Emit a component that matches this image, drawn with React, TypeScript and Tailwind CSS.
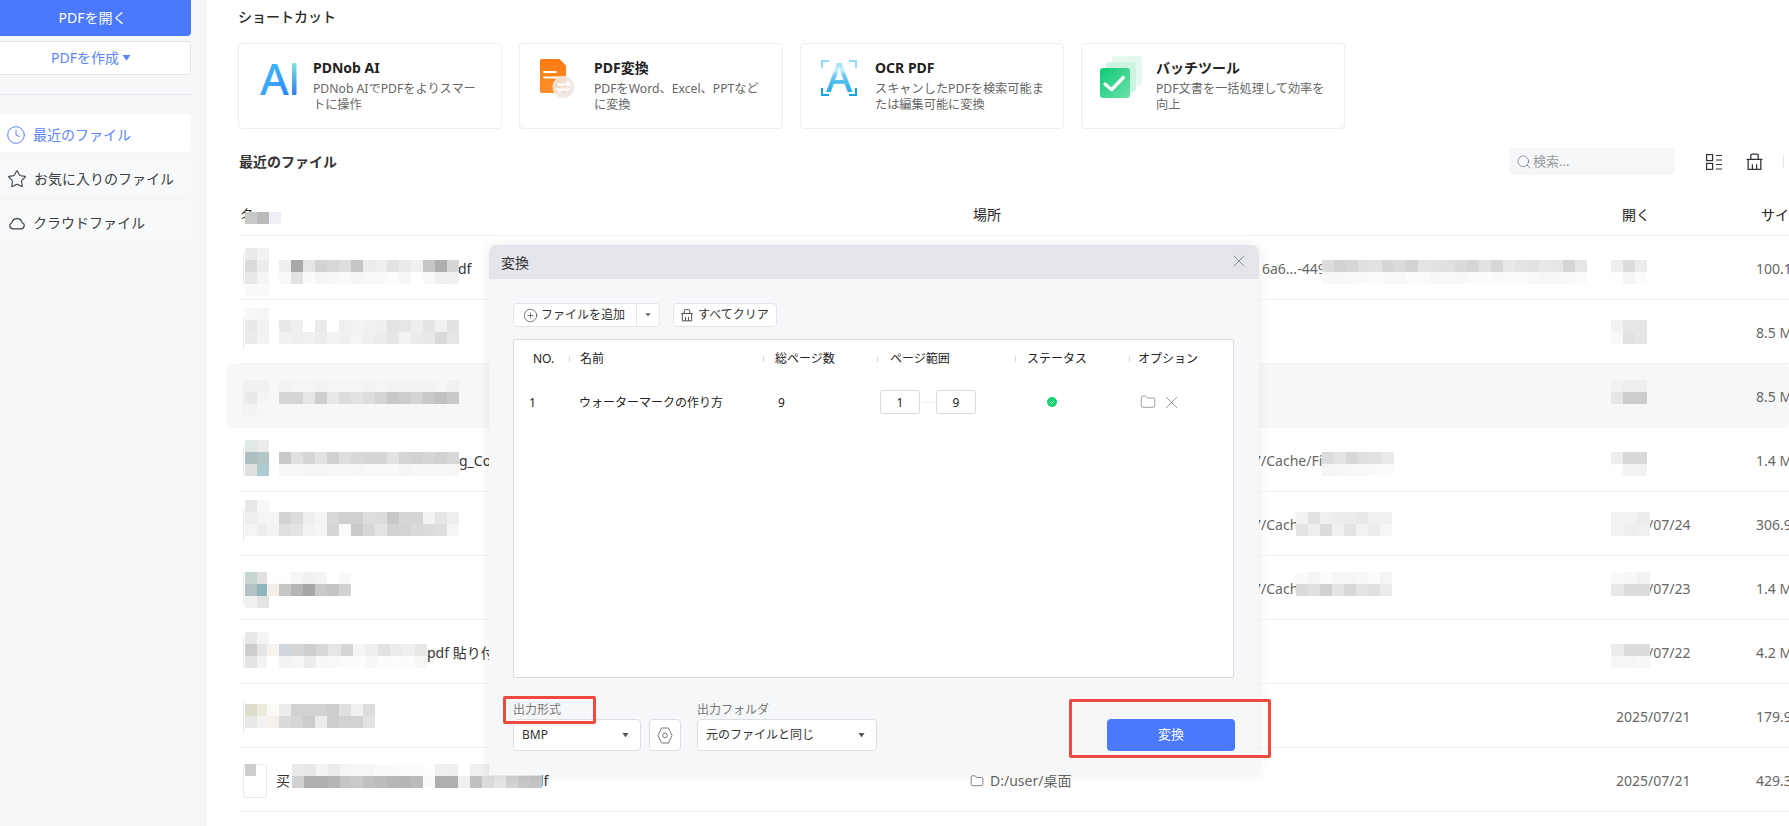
import React from "react";
import { Clock, Star, Search, CirclePlus, Folder, X } from "lucide-react";

type Piece = { x: number; y: number; c?: number; rows: string[] };

const hex = (v: string) => (v.length === 2 ? `#${v}${v}${v}` : `#${v}`);

const pieces: Piece[] = [
  { x: 245, y: 212, rows: ["c8 ba eef0f5"] },
  // row 1
  { x: 245, y: 248, rows: ["ea f2", "db ec", "e8 f4", "fa fa"] },
  { x: 279, y: 260, rows: ["ee a9 e6 d3 d8 de c6 ec ee e2 ea f0 c6 af d6", "f9 e3 fa f5 f8 fa f5 f8 f9 fb f6 ff f9 f0 f1"] },
  { x: 1322, y: 260, c: 12.05, rows: ["dc d2 d6 e0 e2 d6 da d2 e4 e2 e0 da d6 e2 d6 e8 e4 e2 e8 e6 d4 e6", "f8 f7 f9 fa fb f9 f8 fb fa f7 f9 f8 fb fc fa fb fc f9 f7 f8 f9 fb"] },
  { x: 1611, y: 260, rows: ["ee dc ec", "fe f5 fa"] },
  // row 2
  { x: 245, y: 308, rows: ["f8 f5", "e9 f2", "eb f3"] },
  { x: 279, y: 320, rows: ["e8 ef ff ea ff f0 f3 f1 ef e3 e5 ee e4 f0 e2", "f1 ef f0 ec f2 f0 f4 f0 ec e6 f2 eb e8 d9 e5"] },
  { x: 1611, y: 320, rows: ["f2 e6 e6", "f8 e2 e6"] },
  // row 3
  { x: 245, y: 380, rows: ["f1 f1", "e9 f5", "f3 f6"] },
  { x: 279, y: 380, rows: ["f2 f5 f5 f2 f5 f5 f5 f2 f5 f3 f3 f3 f3 f6 f1", "d5 d5 e5 ce e8 dc e2 dd d4 c8 cc d4 c8 c0 c8"] },
  { x: 1611, y: 380, rows: ["f2 ee ee", "e6 cc cc"] },
  // row 4
  { x: 245, y: 440, rows: ["e0e8e6 ecebeb", "adbfbf b4c5c5", "dfe0e0 aecbd1"] },
  { x: 279, y: 452, rows: ["c8 e0 d5 e2 d0 de d8 d6 d6 e2 d4 d2 d6 d2 d8", "f7 f7 f5 f5 f7 f8 f6 f9 f9 f9 f5 f7 f7 f8 f6"] },
  { x: 1322, y: 452, rows: ["dc e4 d8 e0 e2 ea", "f4 f6 f8 f9 fa fb"] },
  { x: 1611, y: 452, rows: ["ee d8 d8", "fe f2 f2"] },
  // row 5
  { x: 245, y: 500, rows: ["e8 f7", "ee f4", "f4 ed"] },
  { x: 267, y: 512, rows: ["f5 d2 dc ef f4 d8 d0 d0 de dc c8 d6 d6 f3 e6 ee", "f4 e0 e4 f2 f5 d6 fa ca d8 e4 d2 d4 da dc de f4"] },
  { x: 1296, y: 512, rows: ["f2 e2 f0 ec ec e8 f0 f0", "e4 ee dc f0 e4 f2 ec f6"] },
  { x: 1611, y: 512, c: 13, rows: ["f2 f2 ec", "f2 ee f0"] },
  // row 6
  { x: 245, y: 572, rows: ["c8d6d2 e0e0e0", "b4c0c2 8eb4bc", "f0 e4"] },
  { x: 267, y: 572, rows: ["fe fe f6 f1 f4 ff f9", "f5efea c6 b4 a6 c8 c4 d2"] },
  { x: 1296, y: 572, rows: ["fa f4 fc f6 f6 f8 fc f4", "da e0 d0 e4 d8 e4 e0 ec"] },
  { x: 1611, y: 572, c: 13, rows: ["fa f8 f2", "e8 dc dc"] },
  // row 7
  { x: 245, y: 632, rows: ["e8 f4", "cc e6", "e4 f3"] },
  { x: 267, y: 644, c: 12.3, rows: ["f8f3ee d0d6db d4 cf d8 e6 d6 f5 ee e2 ec f0 e8", "ff f3 f6 ec f8 f9 fb fc f8 fb fd fb f7"] },
  { x: 1611, y: 644, c: 13, rows: ["ec dc dc", "f6 f6 f8"] },
  // row 8
  { x: 245, y: 704, rows: ["dedccc ebebdd", "e8 f3"] },
  { x: 267, y: 704, rows: ["fcfaf6 ec d2 d2 d2 cc e0 f0 dc", "f5f1ed da d6 cc ec cc d2 d2 e2"] },
  // row 9
  { x: 245, y: 764, c: 11, rows: ["cc"] },
  { x: 292, y: 764, c: 11.9, rows: ["ea e8 f3 ec f4 f6 f6 fa fa fb fc fe f0 ef ff f0 ee ef f0 ee e8", "d0 ae ae b6 c6 ca c0 bc b8 b6 ba fa ae ae ef c0 dc e6 d2 c8 c4"] },
];

const rows = [
  { name: "df", pad: 191, loc: "6a6...-449", locPad: 292, date: "", size: "100.1 MB" },
  { name: "", pad: 0, loc: "", locPad: 0, date: "", size: "8.5 MB" },
  { name: "", pad: 0, loc: "", locPad: 0, date: "", size: "8.5 MB", active: true },
  { name: "g_Con", pad: 192, loc: "7/Cache/Fi", locPad: 283, date: "", size: "1.4 MB" },
  { name: "", pad: 0, loc: "7/Cache", locPad: 283, date: "2025/07/24", size: "306.9 MB" },
  { name: "", pad: 0, loc: "7/Cache", locPad: 283, date: "2025/07/23", size: "1.4 MB" },
  { name: "pdf 貼り付け", pad: 160, loc: "", locPad: 0, date: "2025/07/22", size: "4.2 MB" },
  { name: "", pad: 0, loc: "", locPad: 0, date: "2025/07/21", size: "179.9 MB" },
  { name: "df", pad: 245, loc: "D:/user/桌面", locPad: 0, date: "2025/07/21", size: "429.3 MB", folder: true, buy: true },
];

function Mosaic({ p }: { p: Piece }) {
  const c = p.c ?? 12;
  return (
    <div className="absolute flex flex-col" style={{ left: p.x, top: p.y }}>
      {p.rows.map((r, i) => (
        <div key={i} className="flex">
          {r.split(" ").map((v, j) => (
            <div key={j} style={{ width: c, height: 12, background: hex(v) }} />
          ))}
        </div>
      ))}
    </div>
  );
}

function Trash({ size = 18, color = "#2f3339" }: { size?: number; color?: string }) {
  return (
    <svg width={size} height={size} viewBox="0 0 18 18" fill="none" stroke={color} strokeWidth="1.2">
      <path d="M1.5 7h15" />
      <path d="M5.5 7V3.2a1.2 1.2 0 0 1 1.2-1.2h4.6a1.2 1.2 0 0 1 1.2 1.2V7" />
      <path d="M3 7v9.5h12V7" />
      <path d="M7 11.5v5M11 11.5v5" />
    </svg>
  );
}

function Caret({ color = "#5f6368", w = 8 }: { color?: string; w?: number }) {
  return (
    <svg width={w} height={w * 0.625} viewBox="0 0 8 5">
      <path d="M0.5 0h7L4 5z" fill={color} />
    </svg>
  );
}

function AiLogo() {
  return (
    <svg width="42" height="40" viewBox="0 0 42 40" className="mt-px overflow-visible">
      <defs>
        <linearGradient id="aiA" x1="0" y1="0" x2="0.6" y2="1">
          <stop offset="0" stopColor="#3ad0f2" />
          <stop offset="0.6" stopColor="#3aa6fb" />
          <stop offset="1" stopColor="#2f86fb" />
        </linearGradient>
        <linearGradient id="aiI" x1="0" y1="0" x2="0" y2="1">
          <stop offset="0" stopColor="#7fe7dc" />
          <stop offset="1" stopColor="#2f7cf0" />
        </linearGradient>
      </defs>
      <text x="1" y="35" fontSize="44" fontWeight="500" fontFamily="'Noto Sans', sans-serif" fill="url(#aiA)">A</text>
      <rect x="33" y="3" width="4.5" height="32" rx="1" fill="url(#aiI)" />
    </svg>
  );
}

function ConvertLogo() {
  return (
    <svg width="36" height="40" viewBox="0 0 36 40">
      <defs>
        <linearGradient id="cvA" x1="0" y1="0" x2="0" y2="1">
          <stop offset="0" stopColor="#ff7a10" />
          <stop offset="1" stopColor="#ff8f2a" />
        </linearGradient>
      </defs>
      <path d="M0 1.5A1.5 1.5 0 0 1 1.5 0h18L26 6.5V34H1.5A1.5 1.5 0 0 1 0 32.5z" fill="url(#cvA)" />
      <path d="M4 13h12M4 18.5h16" stroke="#fff" strokeWidth="1.8" strokeLinecap="round" />
      <circle cx="23.5" cy="28" r="11" fill="#efe6de" fillOpacity="0.92" />
      <path d="M17.5 25.5h12l-3-2.5M29.5 30.5h-12l3 2.5" stroke="#fff" strokeWidth="1.8" fill="none" />
    </svg>
  );
}

function OcrLogo() {
  return (
    <svg width="40" height="40" viewBox="0 0 40 40" className="mt-px overflow-visible">
      <defs>
        <linearGradient id="ocrA" x1="0" y1="0" x2="0" y2="1">
          <stop offset="0.12" stopColor="#6cc9f3" />
          <stop offset="0.38" stopColor="#c8eefb" />
          <stop offset="0.48" stopColor="#6fcbf2" />
          <stop offset="0.85" stopColor="#12a4e4" />
        </linearGradient>
      </defs>
      <path d="M1 8V1h7M28 1h7v7" stroke="#8fdcfb" strokeWidth="2" fill="none" />
      <path d="M1 28v7h7M28 35h7v-7" stroke="#14a4e2" strokeWidth="2" fill="none" />
      <text x="18" y="32" textAnchor="middle" fontSize="40" fontWeight="500" fontFamily="'Noto Sans', sans-serif" fill="url(#ocrA)">A</text>
    </svg>
  );
}

function BatchLogo() {
  return (
    <svg width="42" height="42" viewBox="0 0 42 42" className="-mt-[3px]">
      <defs>
        <linearGradient id="bt" x1="0" y1="0" x2="1" y2="1">
          <stop offset="0" stopColor="#0cca73" />
          <stop offset="1" stopColor="#6ee0ac" />
        </linearGradient>
      </defs>
      <rect x="12" y="0" width="30" height="30" rx="3" fill="#e6f9f1" />
      <rect x="6" y="6" width="30" height="30" rx="3" fill="#cdf3e1" />
      <rect x="0" y="12" width="30" height="30" rx="3" fill="url(#bt)" />
      <path d="M5 28l6.7 5.7L23.3 21.5" stroke="#fff" strokeWidth="3.4" fill="none" strokeLinecap="round" strokeLinejoin="round" />
    </svg>
  );
}

const cards = [
  { logo: <AiLogo />, lx: "ml-[20px]", tx: "ml-[12px]", title: "PDNob AI", desc: ["PDNob AIでPDFをよりスマー", "トに操作"] },
  { logo: <ConvertLogo />, lx: "ml-[20px]", tx: "ml-[12px]", title: "PDF変換", desc: ["PDFをWord、Excel、PPTなど", "に変換"] },
  { logo: <OcrLogo />, lx: "ml-[20px]", tx: "ml-[12px]", title: "OCR PDF", desc: ["スキャンしたPDFを検索可能ま", "たは編集可能に変換"] },
  { logo: <BatchLogo />, lx: "ml-[18px]", tx: "ml-[14px]", title: "バッチツール", desc: ["PDF文書を一括処理して効率を", "向上"] },
];

function HeadCol({ w, label, pl }: { w: string; label: string; pl: string }) {
  return (
    <div className={`flex items-center ${w}`}>
      <span className="h-[6px] w-px bg-[#d5d7dc]" />
      <span className={pl}>{label}</span>
    </div>
  );
}

export default function App() {
  return (
    <div className="relative flex h-[826px] w-[1789px] overflow-hidden bg-white font-['Noto_Sans','Noto_Sans_CJK_JP',sans-serif] text-[#333]">
      {/* Sidebar */}
      <aside className="flex w-[207px] shrink-0 flex-col bg-[#f6f7f9] pr-4">
        <button className="h-[36px] rounded-br-[4px] bg-[#4a78ff] pr-[6px] text-sm text-white">PDFを開く</button>
        <button className="mt-[5px] flex h-[34px] items-center justify-center gap-[3px] rounded-r-[4px] border border-l-0 border-[#e3e5ea] bg-white pr-[8px] text-sm text-[#5b85ff]">
          PDFを作成
          <Caret color="#5b85ff" w={9} />
        </button>
        <div className="mt-[19px] h-px bg-[#e3e5ea]" />
        <div className="mt-[19px] flex h-[38px] items-center gap-[7px] rounded-r-[4px] bg-white pt-[3px] pl-[6px] text-sm text-[#5b85ff]">
          <Clock size={20} strokeWidth={1.2} />
          最近のファイル
        </div>
        <div className="mt-[6px] flex h-[38px] items-center gap-[7px] rounded-r-[4px] bg-[#f8f9fb] pt-[3px] pl-[7px] text-sm text-[#3c3f44]">
          <Star size={20} strokeWidth={1.3} />
          お気に入りのファイル
        </div>
        <div className="mt-[6px] flex h-[38px] items-center gap-[7px] rounded-r-[4px] bg-[#f8f9fb] pt-[3px] pl-[8px] text-sm text-[#3c3f44]">
          <svg width="18" height="18" viewBox="0 0 17 17" fill="none" stroke="#3c3f44" strokeWidth="1.1">
            <path d="M4.5 14h8a3 3 0 0 0 .9-5.8A5 5 0 0 0 3.7 8.2 3 3 0 0 0 4.5 14z" />
          </svg>
          クラウドファイル
        </div>
      </aside>

      {/* Main */}
      <main className="min-w-0 flex-1 pl-[31px]">
        <div className="flex h-[34px] items-center text-sm font-medium text-[#2b2b2b]">ショートカット</div>
        <div className="mt-[9px] flex gap-[17px]">
          {cards.map((c) => (
            <div key={c.title} className="flex h-[86px] w-[264px] items-start rounded-[4px] border border-[#eceef1] pt-[15px]">
              <div className={`flex w-[42px] shrink-0 justify-start ${c.lx}`}>{c.logo}</div>
              <div className={`-mt-px flex flex-col ${c.tx}`}>
                <div className="text-sm leading-[20px] font-bold text-[#222]">{c.title}</div>
                <div className="mt-[3px] text-[12.2px] leading-[16px] whitespace-nowrap text-[#666]">
                  {c.desc[0]}
                  <br />
                  {c.desc[1]}
                </div>
              </div>
            </div>
          ))}
        </div>

        <div className="mt-[19px] flex h-[27px] items-center">
          <div className="pl-[1px] text-sm font-bold text-[#333]">最近のファイル</div>
          <div className="ml-[1172px] flex h-[27px] w-[166px] items-center gap-[1px] rounded-[4px] bg-[#f6f7f9] pl-[7px] text-[13px] text-[#9a9a9a]">
            <Search size={16} strokeWidth={1.2} color="#7a7e85" />
            検索...
          </div>
          <svg className="ml-[31px]" width="16" height="16" viewBox="0 0 16 16" fill="none" stroke="#2f3339" strokeWidth="1.2">
            <rect x="0.6" y="0.6" width="6" height="6" />
            <rect x="0.6" y="9.4" width="6" height="6" />
            <path d="M10 1.5h6M10 6h6M10 10.5h6M10 15h6" />
          </svg>
          <span className="ml-[23px] flex">
            <Trash size={19} />
          </span>
          <span className="ml-[19px] h-[13px] w-px bg-[#e5e7eb]" />
        </div>

        {/* Table head */}
        <div className="flex h-[61px] items-end border-b border-[#f3f4f6] pb-[10px] text-sm text-[#222]">
          <div className="w-[732px] shrink-0 pl-[3px]">名</div>
          <div className="w-[646px] shrink-0 pl-[3px]">場所</div>
          <div className="w-[140px] shrink-0 pl-[6px]">開く</div>
          <div className="shrink-0 pl-[5px] whitespace-nowrap">サイズ</div>
        </div>

        {/* Rows */}
        {rows.map((r, i) => (
          <div
            key={i}
            className={`flex h-[64px] items-center border-b border-[#f3f4f6] pt-[2px] text-sm whitespace-nowrap ${
              r.active ? "-ml-[11px] rounded-[6px] bg-[#f6f7f9] pl-[11px]" : ""
            }`}
          >
            <div className="flex w-[732px] shrink-0 items-center">
              <div
                className={`ml-[5px] h-[34px] w-[24px] shrink-0 rounded-[2px] border-[#e8eaed] ${
                  r.buy ? "border bg-white" : "border-l"
                }`}
              />
              {r.buy && <span className="ml-[9px]">买</span>}
              <span className="text-[#333]" style={{ marginLeft: r.pad }}>
                {r.name}
              </span>
            </div>
            <div className="flex w-[646px] shrink-0 items-center text-[#666]">
              {r.folder && <Folder size={14} strokeWidth={1.2} className="mr-[6px] text-[#555]" />}
              <span style={{ marginLeft: r.locPad }}>{r.loc}</span>
            </div>
            <div className="w-[140px] shrink-0 text-[#666]">{r.date}</div>
            <div className="shrink-0 text-[#666]">{r.size}</div>
          </div>
        ))}
      </main>

      {/* Pixelated regions laid over the page */}
      {pieces.map((p, i) => (
        <Mosaic key={i} p={p} />
      ))}

      {/* Convert dialog */}
      <div className="absolute top-[245px] left-[489px] flex h-[530px] w-[770px] flex-col overflow-hidden rounded-t-[8px] bg-[#f6f7f9] shadow-[0_0_12px_rgba(0,0,0,0.08)]">
        <div className="flex h-[34px] shrink-0 items-center justify-between bg-[#e3e5ea] pt-px pr-[10px] pl-3 text-sm text-[#333]">
          変換
          <X size={20} strokeWidth={1} color="#7a7e85" className="-mt-[3px]" />
        </div>
        <div className="flex flex-1 flex-col px-6 pt-6">
          <div className="flex h-[24px] text-xs text-[#333]">
            <div className="flex w-[124px] items-center gap-[3px] rounded-l-[4px] border border-[#e3e5ea] bg-white pl-[9px]">
              <CirclePlus size={15} strokeWidth={1} />
              ファイルを追加
            </div>
            <div className="flex w-[23px] items-center justify-center rounded-r-[4px] border border-l-0 border-[#e3e5ea] bg-white">
              <Caret w={6} color="#777" />
            </div>
            <div className="ml-[13px] flex w-[104px] items-center gap-[4px] rounded-[4px] border border-[#e3e5ea] bg-white pl-[6px]">
              <Trash size={14} color="#444" />
              すべてクリア
            </div>
          </div>

          <div className="mt-3 h-[339px] w-[721px] rounded-[2px] border border-[#d9dbe0] bg-white text-xs text-[#222]">
            <div className="flex h-[37px]">
              <div className="flex w-[55px] items-center pl-[19px]">NO.</div>
              <HeadCol w="w-[194px]" pl="ml-[10px]" label="名前" />
              <HeadCol w="w-[114px]" pl="ml-[11px]" label="総ページ数" />
              <HeadCol w="w-[138px]" pl="ml-3" label="ページ範囲" />
              <HeadCol w="w-[114px]" pl="ml-[11px]" label="ステータス" />
              <HeadCol w="w-[100px]" pl="ml-2" label="オプション" />
            </div>
            <div className="mt-[13px] flex h-[24px] items-center">
              <div className="w-[55px] pt-[2px] pl-[15px]">1</div>
              <div className="w-[194px] pt-[2px] pl-[10px]">ウォーターマークの作り方</div>
              <div className="w-[114px] pt-[2px] pl-[15px]">9</div>
              <div className="flex w-[138px] items-center pl-[3px]">
                <div className="flex h-[24px] w-[40px] items-center justify-center rounded-[2px] border border-[#d9dbe0] pt-[2px]">1</div>
                <span className="mx-[2px] h-px w-[12px] bg-[#eceef1]" />
                <div className="flex h-[24px] w-[40px] items-center justify-center rounded-[2px] border border-[#d9dbe0] pt-[2px]">9</div>
              </div>
              <div className="w-[114px] pl-[32px]">
                <svg width="10" height="10" viewBox="0 0 10 10">
                  <circle cx="5" cy="5" r="5" fill="#16d36f" />
                  <path d="M3 5.2l1.5 1.3L7 4" stroke="#d8f7e6" strokeWidth="1" fill="none" />
                </svg>
              </div>
              <div className="flex items-center gap-[5px] pl-[11px]">
                <Folder size={16} strokeWidth={1.1} color="#7a7e85" />
                <X size={21} strokeWidth={0.9} color="#7a7e85" />
              </div>
            </div>
          </div>

          <div className="mt-[24px] flex items-end">
            <div>
              <div className="mb-px text-xs leading-[16px] text-[#777]">出力形式</div>
              <div className="flex h-[32px] w-[128px] items-center justify-between rounded-[4px] border border-[#dcdee3] bg-white pr-[11px] pl-[8px] text-xs text-[#333]">
                BMP
                <Caret w={7} color="#555" />
              </div>
            </div>
            <div className="ml-[8px] flex h-[32px] w-[32px] items-center justify-center rounded-[4px] border border-[#dcdee3] bg-white">
              <svg width="16" height="17" viewBox="0 0 16 17" fill="none" stroke="#777" strokeWidth="1">
                <path d="M1 8.5L4.5 1h7L15 8.5 11.5 16h-7z" />
                <circle cx="8" cy="8.5" r="2.3" />
              </svg>
            </div>
            <div className="ml-[16px]">
              <div className="mb-px text-xs leading-[16px] text-[#777]">出力フォルダ</div>
              <div className="flex h-[32px] w-[180px] items-center justify-between rounded-[4px] border border-[#dcdee3] bg-white pr-[11px] pl-[8px] text-xs text-[#333]">
                元のファイルと同じ
                <Caret w={7} color="#555" />
              </div>
            </div>
            <button className="ml-[230px] h-[32px] w-[128px] rounded-[4px] bg-[#4a78ff] text-[13px] text-white">変換</button>
          </div>
        </div>
      </div>

      {/* Annotation frames */}
      <div className="absolute top-[696px] left-[503px] h-[28px] w-[93px] rounded-[2px] border-[3px] border-[#ef4a3f]" />
      <div className="absolute top-[699px] left-[1069px] h-[59px] w-[202px] rounded-[2px] border-[3px] border-[#ef4a3f]" />
    </div>
  );
}
